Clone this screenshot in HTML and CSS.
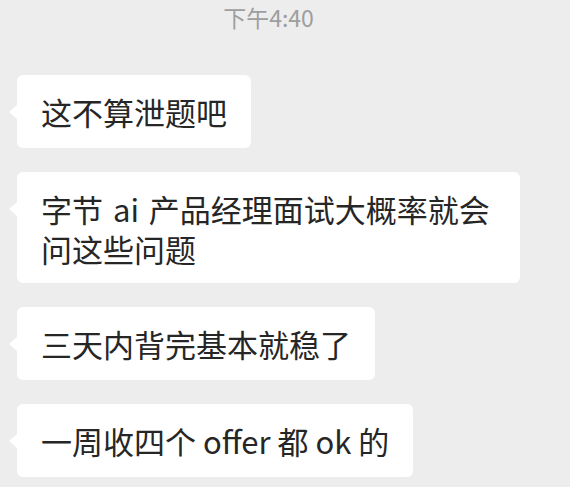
FILE: index.html
```html
<!DOCTYPE html>
<html lang="zh-CN">
<head>
<meta charset="utf-8">
<title>聊天</title>
<link rel="stylesheet" href="styles.css">
</head>
<body>
<div class="chat">
  <div class="time">下午4:40</div>
  <div class="messages">
    <div class="bubble">这不算泄题吧</div>
    <div class="bubble bubble-wide">字节 ai 产品经理面试大概率就会<br>问这些问题</div>
    <div class="bubble">三天内背完基本就稳了</div>
    <div class="bubble">一周收四个 offer 都 ok 的</div>
  </div>
</div>
</body>
</html>
```
FILE: styles.css
```css
html, body {
  margin: 0;
  padding: 0;
  background: #ededed;
}
body {
  font-family: "Noto Sans CJK SC", "Noto Sans", sans-serif;
  width: 570px;
  height: 487px;
  overflow: hidden;
}
.chat {
  padding: 0 0 0 17px;
}
.time {
  height: 34px;
  line-height: 34px;
  font-size: 23px;
  color: #9e9e9e;
  text-align: center;
  padding-right: 50px;
  margin-bottom: 41px;
}
.messages {
  display: flex;
  flex-direction: column;
  align-items: flex-start;
  gap: 24px;
}
.bubble {
  position: relative;
  background: #ffffff;
  border-radius: 6px;
  padding: 16.5px 24px;
  font-size: 31px;
  line-height: 40px;
  color: #262626;
  white-space: nowrap;
}
.bubble-wide {
  padding-bottom: 14.5px;
  padding-right: 30px;
  word-spacing: 3px;
}
.bubble::before {
  content: "";
  position: absolute;
  left: -8px;
  top: 30px;
  border-top: 7px solid transparent;
  border-bottom: 7px solid transparent;
  border-right: 8px solid #ffffff;
}
```
